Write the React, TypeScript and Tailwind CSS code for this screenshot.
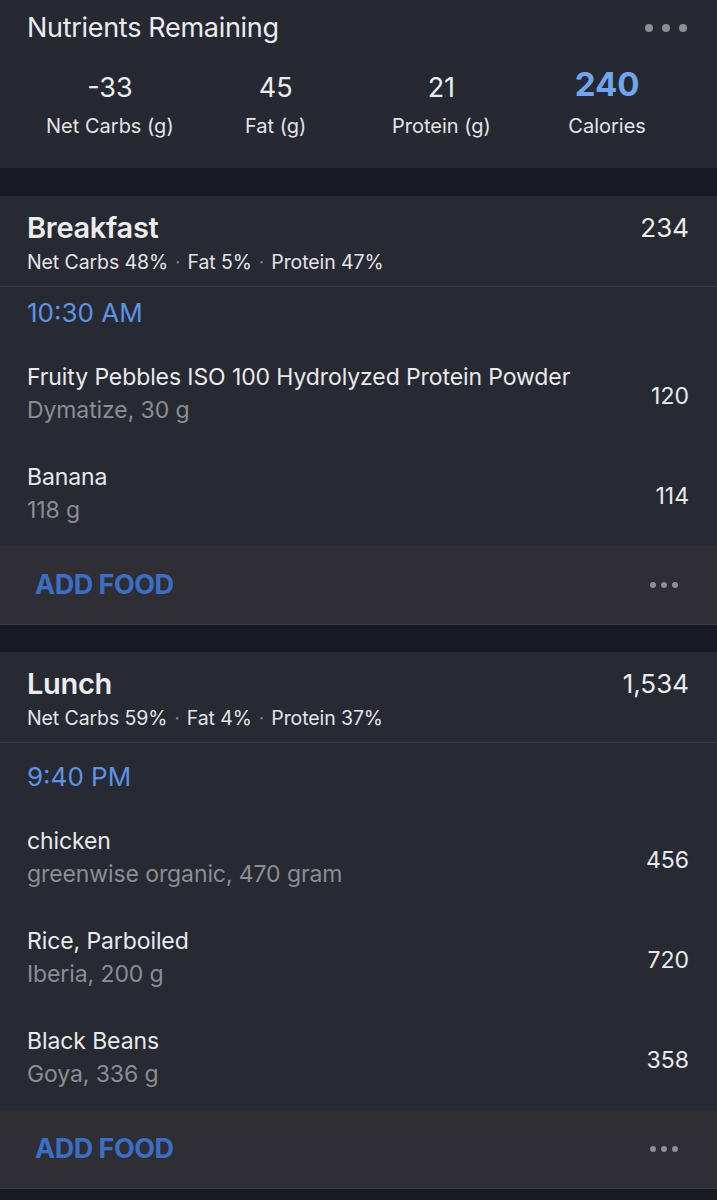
import React from "react"

interface Food {
    name: string
    detail: string
    calories: string
}

interface Meal {
    title: string
    calories: string
    split: string[]
    time: string
    timeClass: string
    foods: Food[]
}

const meals: Meal[] = [
    {
        title: "Breakfast",
        calories: "234",
        split: ["Net Carbs 48%", "Fat 5%", "Protein 47%"],
        time: "10:30 AM",
        timeClass: "pt-[10px] pb-[14px]",
        foods: [
            { name: "Fruity Pebbles ISO 100 Hydrolyzed Protein Powder", detail: "Dymatize, 30 g", calories: "120" },
            { name: "Banana", detail: "118 g", calories: "114" },
        ],
    },
    {
        title: "Lunch",
        calories: "1,534",
        split: ["Net Carbs 59%", "Fat 4%", "Protein 37%"],
        time: "9:40 PM",
        timeClass: "pt-[18px] pb-[14px]",
        foods: [
            { name: "chicken", detail: "greenwise organic, 470 gram", calories: "456" },
            { name: "Rice, Parboiled", detail: "Iberia, 200 g", calories: "720" },
            { name: "Black Beans", detail: "Goya, 336 g", calories: "358" },
        ],
    },
]

const totals = [
    { value: "-33", label: "Net Carbs (g)" },
    { value: "45", label: "Fat (g)" },
    { value: "21", label: "Protein (g)" },
]

const Dots = ({ big }: { big?: boolean }) => (
    <div className={big ? "flex items-center gap-[9px]" : "flex items-center gap-[5px]"}>
        {[0, 1, 2].map((i) => (
            <span key={i} className={big ? "block size-[8px] rounded-full bg-[#8d8d93]" : "block size-[6px] rounded-full bg-[#8d8d93]"} />
        ))}
    </div>
)

const FoodRow = ({ food }: { food: Food }) => (
    <div className="flex h-[100px] items-center justify-between pl-[27px] pr-[28px]">
        <div className="flex flex-col gap-[5px]">
            <p className="text-[23px] leading-[28px] tracking-[-0.1px] text-[#e9e9ec]">{food.name}</p>
            <p className="text-[23px] leading-[28px] tracking-[-0.1px] text-[#8c8d92]">{food.detail}</p>
        </div>
        <p className="pt-[6px] text-[23px] leading-[28px] text-[#e9e9ec]">{food.calories}</p>
    </div>
)

const MealCard = ({ meal }: { meal: Meal }) => (
    <section className="bg-[#272a33]">
        <div className="flex justify-between pl-[27px] pr-[28px] pt-4 pb-3">
            <div className="flex flex-col">
                <h2 className="text-[29px] font-semibold leading-8 tracking-[-0.3px] text-[#ececef]">{meal.title}</h2>
                <div className="mt-[6px] flex items-center gap-[7px] text-[19.5px] leading-6 tracking-[-0.1px] text-[#e4e4e7]">
                    {meal.split.map((s, i) => (
                        <React.Fragment key={s}>
                            {i > 0 && <span className="text-[#7d7f86]">·</span>}
                            <span>{s}</span>
                        </React.Fragment>
                    ))}
                </div>
            </div>
            <p className="text-[26px] leading-8 text-[#ececef]">{meal.calories}</p>
        </div>
        <div className="h-px bg-[#343741]" />
        <div className={"pl-[27px] " + meal.timeClass}>
            <p className="text-[26px] leading-8 text-[#5d92e4]">{meal.time}</p>
        </div>
        {meal.foods.map((f) => (
            <FoodRow key={f.name} food={f} />
        ))}
        <div className="h-[3px]" />
        <div className="flex h-[79px] items-center justify-between border-b border-[#3a3c46] bg-[#2e2e34] pl-[35px] pr-[39px]">
            <span className="text-[27px] font-bold tracking-[-0.5px] text-[#3b6fc6]">ADD FOOD</span>
            <Dots />
        </div>
    </section>
)

export default function App() {
    return (
        <div className="min-h-[1200px] w-[717px] bg-[#181a23] font-['Inter','Liberation_Sans',sans-serif]">
            <header className="bg-[#262932] px-[27px] pt-3 pb-7">
                <div className="flex items-center justify-between">
                    <h1 className="text-[27px] leading-8 tracking-[-0.3px] text-[#ececef]">Nutrients Remaining</h1>
                    <div className="pr-[3px]">
                        <Dots big />
                    </div>
                </div>
                <div className="mt-[21px] grid grid-cols-4">
                    {totals.map((t) => (
                        <div key={t.label} className="flex flex-col items-center">
                            <div className="flex h-9 items-end">
                                <span className="text-[27px] leading-none text-[#ececef]">{t.value}</span>
                            </div>
                            <span className="mt-[11px] text-[20px] leading-7 text-[#e4e4e7]">{t.label}</span>
                        </div>
                    ))}
                    <div className="flex flex-col items-center">
                        <div className="flex h-9 items-end">
                            <span className="text-[33px] font-bold leading-none text-[#71a6ee]">240</span>
                        </div>
                        <span className="mt-[11px] text-[20px] leading-7 text-[#e4e4e7]">Calories</span>
                    </div>
                </div>
            </header>
            <div className="h-[28px]" />
            <MealCard meal={meals[0]} />
            <div className="h-[27px]" />
            <MealCard meal={meals[1]} />
        </div>
    )
}
